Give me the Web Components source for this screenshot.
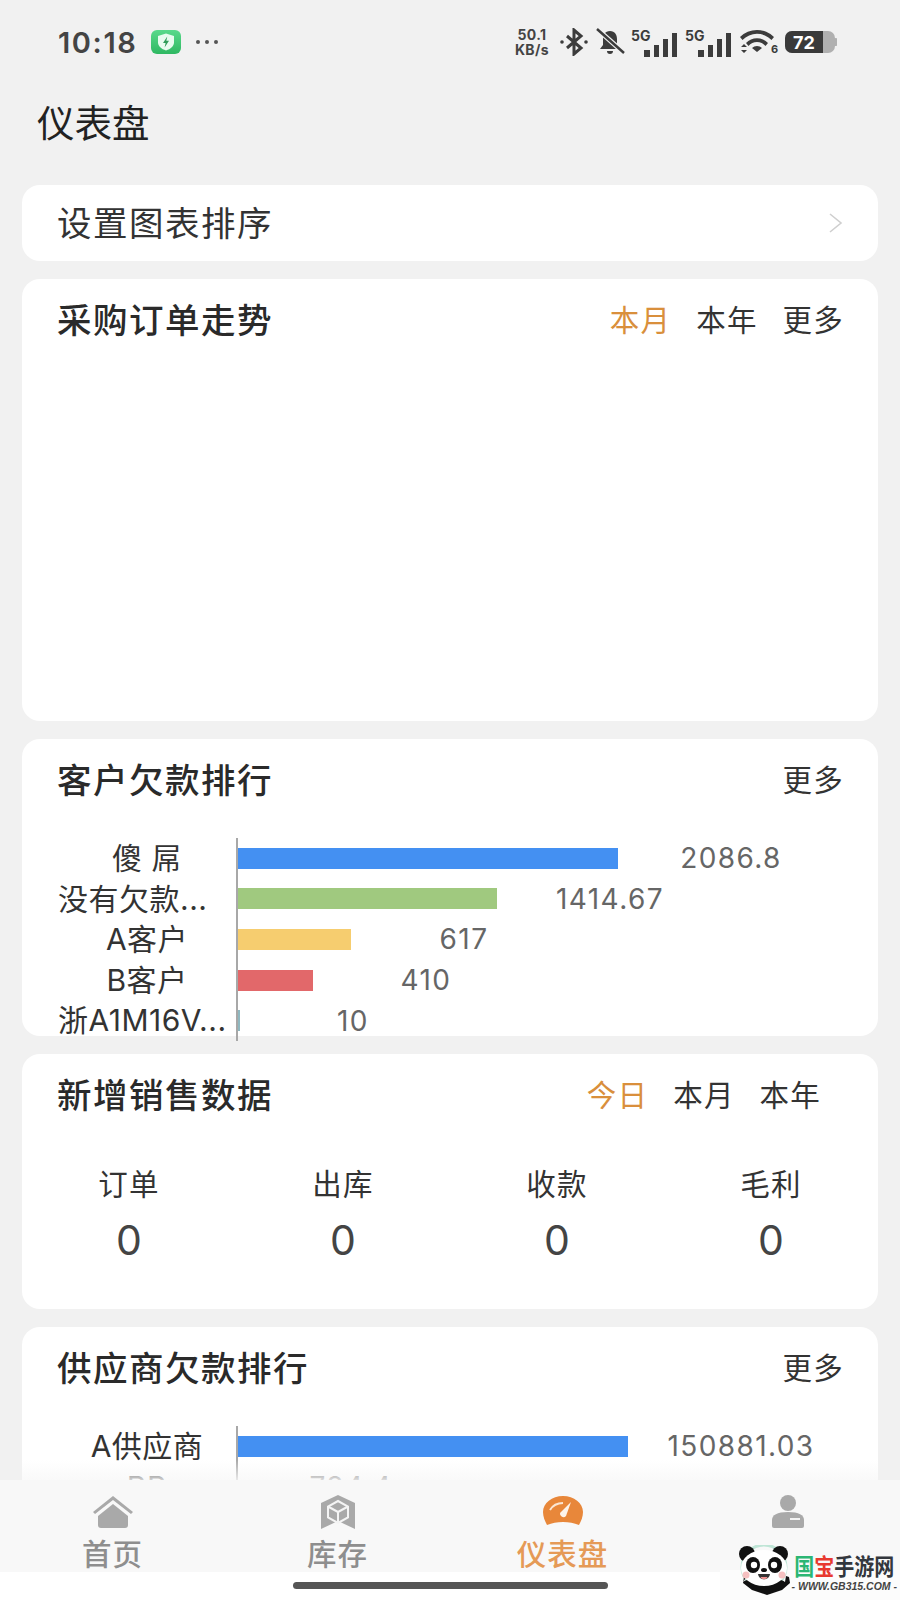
<!DOCTYPE html>
<html lang="zh">
<head>
<meta charset="utf-8">
<title>仪表盘</title>
<style>
  html, body { margin: 0; padding: 0; }
  body {
    width: 900px;
    height: 1600px;
    overflow: hidden;
    background: #f1f1f1;
    font-family: "Liberation Sans", "Noto Sans CJK SC", sans-serif;
    color: #222;
  }
</style>
</head>
<body>
<app-shell>
  <status-bar slot="status"></status-bar>
  <page-title slot="title">仪表盘</page-title>
  <sort-row>设置图表排序</sort-row>
  <dash-card heading="采购订单走势" tabs="本月,本年,更多" active="0" style="height:442px"></dash-card>
  <dash-card heading="客户欠款排行" tabs="更多" style="height:297px">
    <bar-chart data='[["傻 屌",380,"#4490f2","2086.8"],["没有欠款...",259,"#a0c97f","1414.67","l"],["A客户",113,"#f6cd6f","617"],["B客户",75,"#e2686a","410"],["浙A1M16V...",2,"#8fb8c0","10","l"]]'></bar-chart>
  </dash-card>
  <dash-card heading="新增销售数据" tabs="今日,本月,本年" active="0" inset style="height:255px">
    <stat-row data='[["订单","0"],["出库","0"],["收款","0"],["毛利","0"]]'></stat-row>
  </dash-card>
  <dash-card heading="供应商欠款排行" tabs="更多" style="height:260px">
    <bar-chart data='[["A供应商",390,"#4490f2","150881.03"],["BB",0,"#f6e9d8","784.4"]]'></bar-chart>
  </dash-card>
  <tab-bar slot="tabs"></tab-bar>
  <gb-mark slot="mark"></gb-mark>
</app-shell>

<script>
const CJK = '"Noto Sans CJK SC", sans-serif';
const LATIN = 'Inter, "Noto Sans CJK SC", sans-serif';

class AppShell extends HTMLElement {
  constructor() {
    super();
    this.attachShadow({mode: 'open'}).innerHTML = `
      <style>
        :host { display: flex; flex-direction: column; height: 1600px; position: relative; overflow: hidden; }
        .scroll { flex: 1; min-height: 0; overflow: hidden; position: relative; padding: 0 22px; display: flex; flex-direction: column; gap: 18px; }
        .fade { position: absolute; left: 22px; right: 22px; bottom: 0; height: 20px; background: linear-gradient(rgba(248,248,248,0), rgba(248,248,248,.8)); }
        .bottom { height: 28px; background: #fff; display: flex; justify-content: center; align-items: flex-start; }
        .pill { width: 315px; height: 7px; margin-top: 10px; border-radius: 4px; background: #555; }
      </style>
      <slot name="status"></slot>
      <slot name="title"></slot>
      <div class="scroll"><slot></slot><div class="fade"></div></div>
      <slot name="tabs"></slot>
      <div class="bottom"><div class="pill"></div></div>
      <slot name="mark"></slot>`;
  }
}

class StatusBar extends HTMLElement {
  constructor() {
    super();
    this.attachShadow({mode: 'open'}).innerHTML = `
      <style>
        :host { display: flex; align-items: center; height: 84px; padding: 0 63px 0 58px; box-sizing: border-box; color: #444; font-family: ${LATIN}; }
        .time { font-size: 29px; font-weight: 600; letter-spacing: 1.6px; }
        .app { margin-left: 14px; }
        .dots { margin-left: 14px; }
        .right { margin-left: auto; display: flex; align-items: center; gap: 6px; }
        .speed { font-size: 14px; font-weight: 700; line-height: 15px; text-align: center; width: 42px; letter-spacing: .4px; }
        svg { display: block; }
      </style>
      <span class="time">10:18</span>
      <svg class="app" width="30" height="24" viewBox="0 0 30 24">
        <defs><linearGradient id="g" x1="0" y1="0" x2="0" y2="1"><stop offset="0" stop-color="#59d98b"/><stop offset="1" stop-color="#2fb862"/></linearGradient></defs>
        <rect width="30" height="24" rx="6" fill="url(#g)"/>
        <path d="M15 3.5l8 2.6v6.2c0 4-3.4 6.800-8 8.200-4.600-1.400-8-4.200-8-8.200V6.100z" fill="#e8fbef"/>
        <path d="M16.300 6.500l-4.300 6.600h2.600l-1 4.500 4.400-6.800h-2.700z" fill="#2e9c58"/>
      </svg>
      <svg class="dots" width="24" height="6" viewBox="0 0 24 6" fill="#555"><circle cx="3" cy="3" r="2"/><circle cx="12" cy="3" r="2"/><circle cx="21" cy="3" r="2"/></svg>
      <div class="right">
        <div class="speed">50.1<br>KB/s</div>
        <svg width="30" height="28" viewBox="0 0 30 28" fill="none" stroke="#3c3c3c" stroke-width="3"><path d="M8 8l14 12-7 6V2l7 6L8 20"/><circle cx="3" cy="14" r="1.800" fill="#3c3c3c" stroke="none"/><circle cx="27" cy="14" r="1.800" fill="#3c3c3c" stroke="none"/></svg>
        <svg width="30" height="28" viewBox="0 0 30 28"><path d="M15 3c-5 0-7 4-7 8v6l-3 4h20l-3-4v-6c0-4-2-8-7-8z" fill="#3c3c3c"/><path d="M12 23h6a3 3 0 0 1-6 0z" fill="#3c3c3c"/><path d="M2 1l27 24" stroke="#f1f1f1" stroke-width="5"/><path d="M2 1l27 24" stroke="#3c3c3c" stroke-width="2.500"/></svg>
        <sig-icon></sig-icon><sig-icon></sig-icon>
        <svg width="40" height="30" viewBox="0 0 40 30" fill="#3c3c3c"><path d="M1 10a24 24 0 0 1 34 0l-2.500 3a20 20 0 0 0-29 0z"/><path d="M7 16a15 15 0 0 1 22 0l-2.500 3a11 11 0 0 0-17 0z"/><path d="M13 21a7 7 0 0 1 10 0l-5 4z"/><path d="M2 20l3-3 3 3zM2 23l3 3 3-3z"/><text x="32" y="26" font-size="11" font-weight="700" font-family="Inter, sans-serif">6</text></svg>
        <svg width="52" height="24" viewBox="0 0 52 24"><rect x="0" y="1" width="50" height="22" rx="7" fill="#b0b0b0"/><path d="M7 1h31v22H7a7 7 0 0 1-7-7V8a7 7 0 0 1 7-7z" fill="#3a3a3a"/><path d="M50 8a4 4 0 0 1 0 8z" fill="#b0b0b0"/><text x="19" y="18.500" text-anchor="middle" font-size="18" font-weight="700" fill="#fff" font-family="Inter, sans-serif">72</text></svg>
      </div>`;
  }
}

class SigIcon extends HTMLElement {
  constructor() {
    super();
    this.attachShadow({mode: 'open'}).innerHTML = `
      <style>:host { display: block; }</style>
      <svg width="48" height="32" viewBox="0 -4 48 32" style="display:block">
        <text x="0" y="11" font-size="14" font-weight="700" fill="#3c3c3c" font-family="Inter, sans-serif">5G</text>
        <rect x="13" y="20" width="6" height="7" fill="#3c3c3c"/><rect x="23" y="15" width="5" height="12" fill="#3c3c3c"/><rect x="32" y="9" width="5" height="18" fill="#3c3c3c"/><rect x="41" y="3" width="5" height="24" fill="#3c3c3c"/>
      </svg>`;
  }
}

class PageTitle extends HTMLElement {
  constructor() {
    super();
    this.attachShadow({mode: 'open'}).innerHTML = `
      <style>:host { display: block; height: 101px; padding: 16px 0 0 37px; box-sizing: border-box; font: 400 37.5px/42px ${CJK}; color: #222; }</style>
      <slot></slot>`;
  }
}

class SortRow extends HTMLElement {
  constructor() {
    super();
    this.attachShadow({mode: 'open'}).innerHTML = `
      <style>
        :host { display: flex; align-items: center; justify-content: space-between; flex: none; height: 76px; padding: 0 35px 4px 35px; box-sizing: border-box; background: #fff; border-radius: 18px; font: 400 34.500px/40px ${CJK}; color: #333; letter-spacing: 1.500px; }
        svg { margin-top: 4px; }
      </style>
      <slot></slot>
      <svg width="14" height="20" viewBox="0 0 14 20" fill="none" stroke="#cfcfcf" stroke-width="1.600"><path d="M1 1l11 9-11 9"/></svg>`;
  }
}

class DashCard extends HTMLElement {
  constructor() {
    super();
    const tabs = (this.getAttribute('tabs') || '').split(',');
    const active = this.getAttribute('active');
    const links = tabs.map((t, i) => `<span class="${String(i) === active ? 'on' : ''}">${t}</span>`).join('');
    this.attachShadow({mode: 'open'}).innerHTML = `
      <style>
        :host { display: block; flex: none; box-sizing: border-box; background: #fff; border-radius: 18px; }
        .head { display: flex; align-items: center; justify-content: space-between; height: 80px; padding: 0 34px 0 35px; }
        :host([inset]) .head { padding-right: 57px; }
        h2 { margin: 0 0 3px; font: 500 34.500px/40px ${CJK}; color: #2a2a2a; letter-spacing: 1.500px; }
        .links { display: flex; gap: 25px; margin-bottom: 2px; font: 400 29.500px/40px ${CJK}; color: #333; letter-spacing: 1.200px; }
        .on { color: #d98f3c; }
      </style>
      <div class="head"><h2>${this.getAttribute('heading')}</h2><div class="links">${links}</div></div>
      <slot></slot>`;
  }
}

class BarChart extends HTMLElement {
  constructor() {
    super();
    const rows = JSON.parse(this.getAttribute('data'));
    const html = rows.map(([name, w, color, val, left]) => `
      <div class="row">
        <div class="name ${left ? 'left' : ''}">${name}</div>
        <div class="bar" style="width:${w}px;background:${color}"></div>
        <div class="val">${val}</div>
      </div>`).join('');
    this.attachShadow({mode: 'open'}).innerHTML = `
      <style>
        :host { display: block; margin: 19px 0 0 36px; }
        .plot { display: flex; flex-direction: column; }
        .row { display: flex; align-items: center; height: 40.6px; }
        .name { width: 180px; flex: none; text-align: center; font: 400 30px/40px ${LATIN}; color: #333; white-space: nowrap; border-right: 2px solid #a8a8a8; height: 40.6px; box-sizing: border-box; letter-spacing: .5px; }
        .name.left { text-align: left; letter-spacing: .5px; }
        .bar { height: 21px; flex: none; }
        .val { width: 226px; flex: none; text-align: center; font: 400 28px/40px ${LATIN}; color: #666; letter-spacing: 1.4px; }
      </style>
      <div class="plot">${html}</div>`;
  }
}

class StatRow extends HTMLElement {
  constructor() {
    super();
    const html = JSON.parse(this.getAttribute('data')).map(([k, v]) => `
      <div class="cell"><div class="k">${k}</div><div class="v">${v}</div></div>`).join('');
    this.attachShadow({mode: 'open'}).innerHTML = `
      <style>
        :host { display: grid; grid-template-columns: repeat(4, 1fr); padding-top: 28px; text-align: center; }
        .k { font: 400 29.500px/40px ${CJK}; color: #333; letter-spacing: 1.200px; }
        .v { font: 400 41px/54px ${LATIN}; color: #444; margin-top: 11px; }
      </style>
      ${html}`;
  }
}

class TabBar extends HTMLElement {
  constructor() {
    super();
    this.attachShadow({mode: 'open'}).innerHTML = `
      <style>
        :host { display: grid; grid-template-columns: repeat(4, 1fr); flex: none; height: 92px; background: #f8f8f8; font: 500 29.500px/34px ${CJK}; letter-spacing: 1px; color: #8e8e8e; }
        .tab { display: flex; flex-direction: column; align-items: center; padding-top: 15px; }
        .tab svg { display: block; height: 34px; margin-bottom: 6px; }
        .on { color: #e59a56; }
      </style>
      <div class="tab">
        <svg width="42" height="34" viewBox="0 0 42 34"><path d="M1 17L21 1l20 16-2 2L21 5 3 19z" fill="#a9a9a9"/><path d="M21 9l15 12v9a3 3 0 0 1-3 3H9a3 3 0 0 1-3-3v-9z" fill="#a9a9a9"/></svg>
        首页
      </div>
      <div class="tab">
        <svg width="36" height="34" viewBox="0 0 36 34"><path d="M18 0l17 8v26l-17-8-17 8V8z" fill="#a9a9a9"/><path d="M18 6l10 5.500v11L18 28 8 22.500v-11zM8 11.500l10 5.500 10-5.500M18 17v11" fill="none" stroke="#f4f4f4" stroke-width="2"/></svg>
        库存
      </div>
      <div class="tab on">
        <svg width="42" height="34" viewBox="0 0 42 34"><path d="M21 1c11 0 20 7 20 16 0 5-2 9-4 13-5-2-10-3-16-3s-11 1-16 3c-2-4-4-8-4-13C1 8 10 1 21 1z" fill="#e8873a"/><path d="M8 15c3-5 8-7 13-7" fill="none" stroke="#fbe6d3" stroke-width="2"/><path d="M29 7l-5 14a3.500 3.500 0 0 1-6-3z" fill="#fdf3ea"/></svg>
        仪表盘
      </div>
      <div class="tab">
        <svg width="36" height="34" viewBox="0 0 36 34"><circle cx="18" cy="8" r="8" fill="#a9a9a9"/><path d="M2 31v-6c0-5 5-8 16-8s16 3 16 8v6a2 2 0 0 1-2 2H4a2 2 0 0 1-2-2z" fill="#a9a9a9"/><rect x="20" y="23" width="10" height="2" fill="#f4f4f4"/></svg>
      </div>`;
  }
}

class GbMark extends HTMLElement {
  constructor() {
    super();
    this.attachShadow({mode: 'open'}).innerHTML = `
      <style>
        :host { position: absolute; right: 0; bottom: 0; width: 180px; height: 30px; background: #fcfcfc; }
        .in { position: absolute; right: 3px; bottom: 5px; display: flex; align-items: flex-end; gap: 2px; }
        .t { display: flex; flex-direction: column; align-items: center; margin-bottom: 2px; }
        .n { font: 700 20px/26px ${CJK}; white-space: nowrap; color: #33373d; transform: scaleY(1.15); }
        .g { color: #2bb673; } .r { color: #e8392f; }
        .u { font: italic 700 10.5px/14px "Liberation Sans", sans-serif; color: #444; white-space: nowrap; }
      </style>
      <div class="in">
        <svg width="52" height="50" viewBox="0 0 52 50">
          <circle cx="26" cy="22" r="22" fill="none" stroke="#bfe5d6" stroke-width="3"/>
          <path d="M5 37c6-5 36-5 42 0l1-6 3 1 1 6-8 7-15 5-15-5-9-7 1-6 3-1z" fill="#111"/>
          <circle cx="9" cy="9" r="8" fill="#111"/><circle cx="42" cy="9" r="8" fill="#111"/>
          <ellipse cx="26" cy="23" rx="23" ry="18" fill="#fff"/>
          <ellipse cx="15" cy="20" rx="7" ry="8" fill="#111"/><ellipse cx="37" cy="20" rx="7" ry="8" fill="#111"/>
          <circle cx="16" cy="20" r="3.200" fill="#fff"/><circle cx="36" cy="20" r="3.200" fill="#fff"/>
          <ellipse cx="26" cy="25" rx="3" ry="2" fill="#111"/><path d="M20 29h12c-1 7-11 7-12 0z" fill="#333"/><path d="M22.500 32h7c-1 3-6 3-7 0z" fill="#f0908f"/>
          <circle cx="8" cy="30" r="3.500" fill="#f5c0c0"/><circle cx="44" cy="30" r="3.500" fill="#f5c0c0"/>
        </svg>
        <div class="t"><div class="n"><span class="g">国</span><span class="r">宝</span>手游网</div><div class="u">- WWW.GB315.COM -</div></div>
      </div>`;
  }
}

customElements.define('app-shell', AppShell);
customElements.define('status-bar', StatusBar);
customElements.define('sig-icon', SigIcon);
customElements.define('page-title', PageTitle);
customElements.define('sort-row', SortRow);
customElements.define('dash-card', DashCard);
customElements.define('bar-chart', BarChart);
customElements.define('stat-row', StatRow);
customElements.define('tab-bar', TabBar);
customElements.define('gb-mark', GbMark);
</script>
</body>
</html>
